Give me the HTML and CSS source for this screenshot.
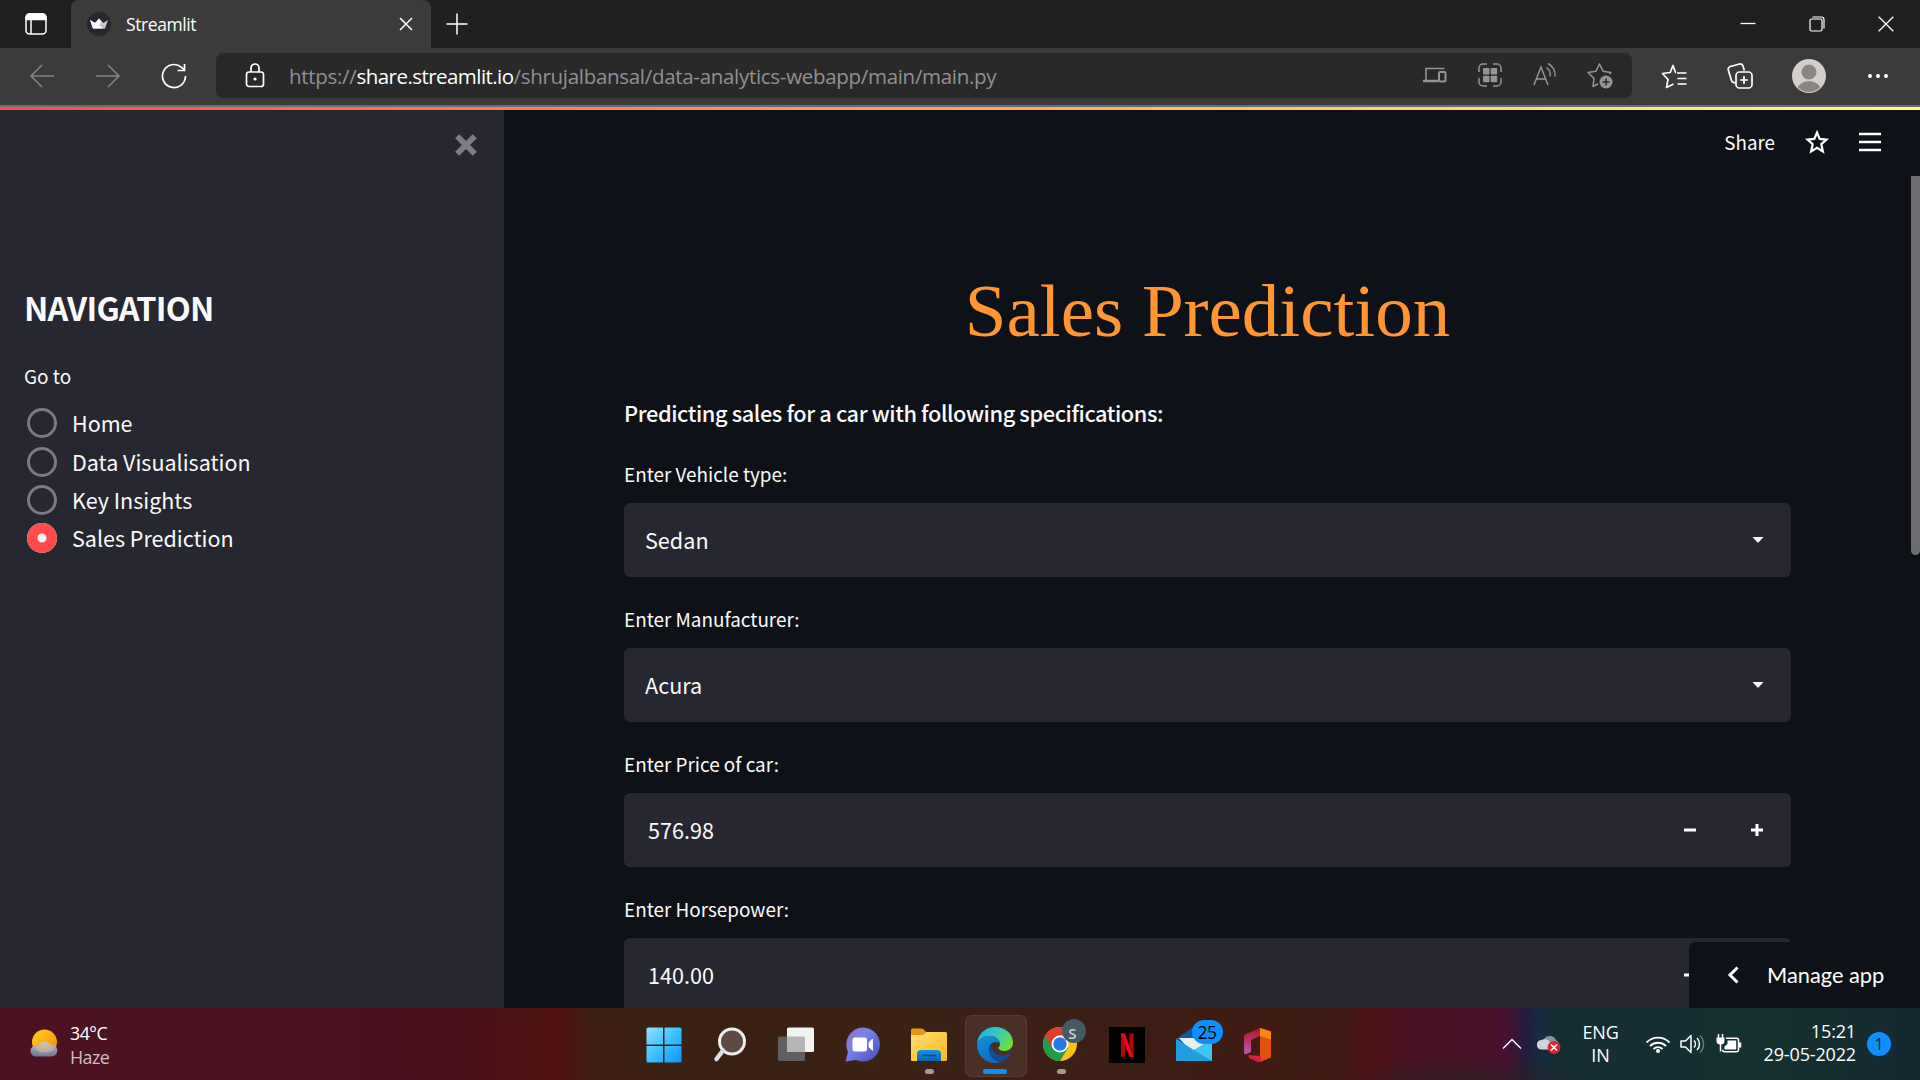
FILE: index.html
```html
<!DOCTYPE html>
<html lang="en">
<head>
<meta charset="utf-8">
<title>Streamlit</title>
<link rel="stylesheet" href="styles.css">
</head>
<body>
<div class="screen">
  <header class="tabstrip">
    <button class="workspaces" aria-label="Tab actions">
      <svg width="24" height="24" viewBox="0 0 24 24" fill="none" stroke="#fff" stroke-width="1.5"><rect x="2" y="2" width="20" height="20" rx="3.5"/><path d="M2 5.5a3.5 3.5 0 0 1 3.5-3.5h13a3.5 3.5 0 0 1 3.5 3.5v2H2z" fill="#fff"/><path d="M7 7v15"/></svg>
    </button>
    <div class="tab">
      <svg class="favicon" width="24" height="24" viewBox="0 0 24 24"><circle cx="12" cy="12" r="12" fill="#262730"/><path d="M3 8l4.500 3L12 6.500 16.500 11 21 8l-3 8.500H6z" fill="#c8c8cc"/><path d="M3 8l9 5 4 3.500H6zM12 6.500l2.500 4L12 13 9 11z" fill="#fff"/></svg>
      <span class="tab-title">Streamlit</span>
      <svg class="tab-close" width="14" height="14" viewBox="0 0 14 14" stroke="#fff" stroke-width="1.5"><path d="M1 1l12 12M13 1L1 13"/></svg>
    </div>
    <svg class="new-tab" width="22" height="22" viewBox="0 0 22 22" stroke="#fff" stroke-width="1.5"><path d="M11 .5v21M.5 11h21"/></svg>
    <div class="window-buttons">
      <svg width="16" height="16" viewBox="0 0 16 16" stroke="#fff" stroke-width="1.3"><path d="M.5 7.500h15"/></svg>
      <svg width="16" height="16" viewBox="0 0 16 16" fill="none" stroke="#fff" stroke-width="1.2"><rect x="1" y="3" width="12" height="12" rx="1.5"/><path d="M3.500 1h9a2.500 2.500 0 0 1 2.500 2.500v9"/></svg>
      <svg width="16" height="16" viewBox="0 0 16 16" stroke="#fff" stroke-width="1.3"><path d="M.7.7l14.600 14.600M15.300.7L.7 15.300"/></svg>
    </div>
  </header>

  <nav class="toolbar">
    <div class="history">
      <svg width="26" height="26" viewBox="0 0 26 26" fill="none" stroke="#848484" stroke-width="1.5"><path d="M25 13H2M13 2L2 13l11 11"/></svg>
      <svg width="26" height="26" viewBox="0 0 26 26" fill="none" stroke="#848484" stroke-width="1.5"><path d="M1 13h23M13 2l11 11-11 11"/></svg>
      <svg width="26" height="26" viewBox="0 0 26 26" fill="none" stroke="#fff" stroke-width="1.7"><path d="M24.500 13A11.500 11.500 0 1 1 20.500 4.300L23.500 7"/><path d="M23.500 1v6.500h-7"/></svg>
    </div>
    <div class="address">
      <svg class="lock" width="20" height="26" viewBox="0 0 20 26" fill="none" stroke="#fff" stroke-width="1.7"><rect x="1.500" y="9" width="17" height="14.500" rx="2.5"/><path d="M6 9V5a4 4 0 0 1 8 0v4"/><circle cx="10" cy="16" r="1.6" fill="#fff" stroke="none"/></svg>
      <span class="url">https://<span class="host">share.streamlit.io</span>/shrujalbansal/data-analytics-webapp/main/main.py</span>
      <div class="page-actions">
        <svg width="26" height="26" viewBox="0 0 26 26" fill="none" stroke="#959595" stroke-width="1.6"><path d="M4 18V6.500h18.500"/><path d="M1 19h15" stroke-width="2.5"/><rect x="17" y="10" width="6.5" height="9.5" rx="1" stroke-width="2"/></svg>
        <svg width="26" height="26" viewBox="0 0 26 26" fill="none" stroke="#959595" stroke-width="1.5"><path d="M2 10V6a4 4 0 0 1 4-4h4M16 2h4a4 4 0 0 1 4 4v4M24 16v4a4 4 0 0 1-4 4h-4M10 24H6a4 4 0 0 1-4-4v-4"/><g fill="#959595" stroke="none"><rect x="6" y="6" width="6.5" height="6.5" rx="1"/><rect x="13.700" y="6" width="6.5" height="6.5" rx="1"/><rect x="6" y="13.700" width="6.5" height="6.5" rx="1"/><rect x="13.700" y="13.700" width="6.5" height="6.5" rx="1"/></g></svg>
        <svg width="26" height="26" viewBox="0 0 26 26" fill="none" stroke="#959595" stroke-width="1.5"><path d="M2 23L9 5l7 18M4.500 17h9M14.500 5.500a9 9 0 0 1 3.500 9M16 1.500a13 13 0 0 1 7 13"/></svg>
        <svg width="26" height="27" viewBox="0 0 26 27" fill="none" stroke="#959595" stroke-width="1.5" stroke-linejoin="round"><path d="M11 22l-5 2.500 1-8L1 10.500l8-1.300L12.500 2 16 9.200l8 1.300-1.500 1.800"/><circle cx="19" cy="20" r="6.5" fill="#959595" stroke="none"/><path d="M19 16.500v7M15.500 20h7" stroke="#292929"/></svg>
      </div>
    </div>
    <div class="browser-actions">
      <svg width="26" height="26" viewBox="0 0 26 26" fill="none" stroke="#fff" stroke-width="1.7" stroke-linejoin="round"><path d="M15 9.500h-.5L12 2.500 9.200 9.500 1.500 10.500l5.500 6-1.500 8 7-3.500M16 10h9.500M16.500 15.500h9M16.500 21h9"/></svg>
      <svg width="26" height="26" viewBox="0 0 26 26" fill="none" stroke="#fff" stroke-width="1.7"><rect x="9" y="9" width="16" height="16" rx="3.5"/><path d="M17 13v8M13 17h8M8.500 20l-2-.6a3 3 0 0 1-2-2L1.300 7a3 3 0 0 1 2-3.500L12.500 1a3 3 0 0 1 3.500 2l1.300 4.500"/></svg>
      <svg width="34" height="34" viewBox="0 0 34 34"><defs><clipPath id="face"><circle cx="17" cy="17" r="16"/></clipPath></defs><circle cx="17" cy="17" r="17" fill="#d3d0cc"/><g clip-path="url(#face)" fill="#8b8683"><circle cx="17" cy="13" r="7.5"/><ellipse cx="17" cy="32" rx="12" ry="10"/></g></svg>
      <svg width="22" height="6" viewBox="0 0 22 6" fill="#fff"><circle cx="3" cy="3" r="2"/><circle cx="11" cy="3" r="2"/><circle cx="19" cy="3" r="2"/></svg>
    </div>
  </nav>
  <div class="rainbow"></div>

  <div class="app">
    <aside class="sidebar">
      <svg class="sidebar-close" width="22" height="22" viewBox="0 0 22 22" stroke="#7d7d83" stroke-width="5.8"><path d="M2.200 2.200l17.600 17.600M19.800 2.200L2.200 19.800"/></svg>
      <h2 class="nav-title">NAVIGATION</h2>
      <p class="nav-label">Go to</p>
      <ul class="options">
        <li><i class="radio"></i><span>Home</span></li>
        <li><i class="radio"></i><span>Data Visualisation</span></li>
        <li><i class="radio"></i><span>Key Insights</span></li>
        <li><i class="radio checked"></i><span>Sales Prediction</span></li>
      </ul>
    </aside>

    <main class="content">
      <div class="app-menu">
        <span class="share">Share</span>
        <svg width="24" height="26" viewBox="0 0 24 26" fill="none" stroke="#fff" stroke-width="2.2"><path d="M12 3.500l2.700 6.400 6.800.7-5.200 4.600 1.600 7.300L12 18.800l-5.900 3.700 1.600-7.300-5.200-4.600 6.800-.7z"/></svg>
        <svg width="22" height="20" viewBox="0 0 22 20" stroke="#fff" stroke-width="2.4"><path d="M0 2h22M0 10h22M0 18h22"/></svg>
      </div>
      <h1 class="title">Sales Prediction</h1>
      <p class="intro">Predicting sales for a car with following specifications:</p>
      <div class="field"><label>Enter Vehicle type:</label>
        <div class="box"><span>Sedan</span><svg class="caret" width="12" height="6" viewBox="0 0 12 6" fill="#fafafa"><path d="M.5 0h11L6.500 5.500h-1z"/></svg></div></div>
      <div class="field"><label>Enter Manufacturer:</label>
        <div class="box"><span>Acura</span><svg class="caret" width="12" height="6" viewBox="0 0 12 6" fill="#fafafa"><path d="M.5 0h11L6.500 5.500h-1z"/></svg></div></div>
      <div class="field"><label>Enter Price of car:</label>
        <div class="box number"><span>576.98</span><div class="steps"><svg width="12" height="12" viewBox="0 0 12 12" stroke="#fff" stroke-width="3"><path d="M0 6h12"/></svg><svg width="12" height="12" viewBox="0 0 12 12" stroke="#fff" stroke-width="3"><path d="M0 6h12M6 0v12"/></svg></div></div></div>
      <div class="field"><label>Enter Horsepower:</label>
        <div class="box number"><span>140.00</span><div class="steps"><svg width="12" height="12" viewBox="0 0 12 12" stroke="#fff" stroke-width="3"><path d="M0 6h12"/></svg><svg width="12" height="12" viewBox="0 0 12 12" stroke="#fff" stroke-width="3"><path d="M0 6h12M6 0v12"/></svg></div></div></div>
      <div class="scrollbar"></div>
      <div class="manage"><svg width="12" height="18" viewBox="0 0 12 18" fill="none" stroke="#fff" stroke-width="3"><path d="M10.500 1.500L3 9l7.500 7.500"/></svg><span>Manage app</span></div>
    </main>
  </div>

  <footer class="taskbar">
    <div class="weather">
      <svg width="28" height="28" viewBox="0 0 28 28"><defs><linearGradient id="sun" x1="0" y1="0" x2="1" y2="1"><stop offset="0" stop-color="#ffd21a"/><stop offset="1" stop-color="#f58a07"/></linearGradient><linearGradient id="cloud" x1="0" y1="0" x2="0" y2="1"><stop offset="0" stop-color="#c3c8d2"/><stop offset="1" stop-color="#717b99"/></linearGradient></defs><circle cx="14.500" cy="13" r="12.5" fill="url(#sun)"/><path d="M6 27.500a5.500 5.500 0 0 1 0-11h2a7.500 7.500 0 0 1 12.500-1 6 6 0 0 1 1.500 12z" fill="url(#cloud)" opacity=".95"/><path d="M5.500 19a9.500 6.500 0 0 0 18 0 9 9 0 0 0-4-3.500 7 7 0 0 0-11 1z" fill="#e5c09a" opacity=".5"/></svg>
      <div class="weather-text"><span>34°C</span><span class="dim">Haze</span></div>
    </div>
    <div class="apps">
      <div class="app-icon"><svg width="36" height="36" viewBox="0 0 36 36"><defs><linearGradient id="win" x1="0" y1="0" x2="1" y2="1"><stop offset="0" stop-color="#8fe3ff"/><stop offset=".5" stop-color="#3cc2ff"/><stop offset="1" stop-color="#0a93ff"/></linearGradient></defs><path d="M2 .5h15v17H.5V2A1.500 1.500 0 0 1 2 .5zM18.500.5H34A1.500 1.500 0 0 1 35.500 2v15.500h-17zM.5 19H17v16.500H2A1.500 1.500 0 0 1 .5 34zM18.500 19h17v15a1.500 1.500 0 0 1-1.500 1.500H18.500z" fill="url(#win)"/></svg></div>
      <div class="app-icon"><svg width="36" height="36" viewBox="0 0 36 36"><circle cx="20" cy="14.500" r="12.5" fill="#614a43" stroke="#eee" stroke-width="3"/><path d="M11 23.500L4.500 32" stroke="#dce1e4" stroke-width="4.5" stroke-linecap="round"/></svg></div>
      <div class="app-icon"><svg width="36" height="36" viewBox="0 0 36 36"><rect x="0" y="9.500" width="27" height="24.5" rx="1.5" fill="#5f5f5f"/><rect x="9" y=".5" width="27" height="24.5" rx="1.5" fill="#f2f2f2"/><path d="M9 9.500h17a1 1 0 0 1 1 1V25H10a1 1 0 0 1-1-1z" fill="#b5b5b5"/></svg></div>
      <div class="app-icon"><svg width="36" height="36" viewBox="0 0 36 36"><defs><linearGradient id="chat" x1="0" y1="0" x2="1" y2="1"><stop offset="0" stop-color="#9b6fb4"/><stop offset=".4" stop-color="#7b83eb"/><stop offset="1" stop-color="#4648b8"/></linearGradient></defs><path d="M18 .5A17 17 0 1 1 11 33L.5 34.500 3 25A17 17 0 0 1 18 .5z" fill="url(#chat)"/><rect x="7.500" y="10.500" width="14.5" height="14" rx="2.5" fill="#fff"/><path d="M24 15.500l3.500-3.500v11.500L24 20z" fill="#fff" stroke="#fff" stroke-width=".8" stroke-linejoin="round"/></svg></div>
      <div class="app-icon running"><svg width="36" height="36" viewBox="0 0 36 36"><defs><linearGradient id="folder" x1="0" y1="0" x2="1" y2="1"><stop offset="0" stop-color="#ffe07a"/><stop offset="1" stop-color="#fbb814"/></linearGradient><linearGradient id="tray" x1="0" y1="0" x2="0" y2="1"><stop offset="0" stop-color="#1496e8"/><stop offset="1" stop-color="#0962b3"/></linearGradient></defs><path d="M0 3a1.500 1.500 0 0 1 1.500-1.500H11c2 0 3 3.500 5 3.500v3H0z" fill="#e29a0c"/><path d="M0 8h12l4-3h18.500A1.500 1.500 0 0 1 36 6.500V33a1 1 0 0 1-1 1H1a1 1 0 0 1-1-1z" fill="url(#folder)"/><path d="M6 34v-7a4 4 0 0 1 4-4h16a4 4 0 0 1 4 4v7z" fill="url(#tray)"/><path d="M11 28.500h14" stroke="#084a8a" stroke-width="1.5"/></svg></div>
      <div class="app-icon active"><svg width="36" height="36" viewBox="0 0 36 36"><defs><linearGradient id="eg" x1="0" y1="0" x2="1" y2=".6"><stop offset="0" stop-color="#1fa7e0"/><stop offset=".5" stop-color="#36c7c4"/><stop offset="1" stop-color="#6be03c"/></linearGradient><linearGradient id="eb" x1="0" y1="0" x2=".4" y2="1"><stop offset="0" stop-color="#1493d8"/><stop offset="1" stop-color="#0d6cc6"/></linearGradient></defs><path d="M0 17C1 6 9 0 18 0c10.500 0 18 7 18 15.500 0 5.500-4 8.500-8.500 8.500-4 0-6-1.500-6-3 0-1 1.500-1.500 1.500-4 0-4-4-8-10-8C7 9 2 12 0 17z" fill="url(#eg)"/><path d="M0 18C1 12 6 9 12 9c6 0 11 3.500 11 8-2-3-9-3-10 3-1 7 5 13 11 15a18 18 0 0 1-24-17z" fill="url(#eb)"/><path d="M13.500 17C10 21 11 31 22 35.500c5-1 9-4 11.500-8 .3-.7-.3-1-1-.7-9 4-18.500-.8-19-9.800z" fill="#134b94"/></svg></div>
      <div class="app-icon running"><svg width="46" height="44" viewBox="0 0 46 44" class="chrome"><g transform="translate(0 8)"><circle cx="17" cy="17" r="17" fill="#fbc116"/><path d="M17 17L2.300 8.500A17 17 0 0 0 17 34l8.500-14z" fill="#219a4b"/><path d="M2.300 8.500A17 17 0 0 1 31.700 8.500H17l-7.500 13z" fill="#e33b2e"/><circle cx="17" cy="17" r="8.5" fill="#fff"/><circle cx="17" cy="17" r="6.7" fill="#2478f0"/></g><circle cx="31" cy="12" r="12" fill="#455a64"/></svg><span class="profile">S</span></div>
      <div class="app-icon"><svg width="36" height="36" viewBox="0 0 36 36"><path d="M0 0h36v36H0z"/><path d="M12 6.500h4v23l-4 .7zM20.500 6.500h4v23.700l-4-.7z" fill="#b1060f"/><path d="M12 6.500h4l8.500 23.700-4.200-.7z" fill="#e50914"/></svg></div>
      <div class="app-icon"><svg width="36" height="36" viewBox="0 0 36 36"><path d="M0 12L16 1h4l16 11v6H0z" fill="#0c59a4"/><path d="M3 11h30v12l-15 5z" fill="#e8eef2"/><path d="M36 12v22H14l-6-5z" fill="#3ec5f3"/><path d="M0 12l36 22H1a1 1 0 0 1-1-1z" fill="#1f9fe2"/></svg><span class="badge">25</span></div>
      <div class="app-icon office"><svg width="36" height="36" viewBox="0 0 36 36"><defs><linearGradient id="ofl" x1="0" y1="0" x2="0" y2="1"><stop offset="0" stop-color="#b01525"/><stop offset="1" stop-color="#bb5db2"/></linearGradient></defs><path d="M20 1v8l-9 4v12l-6 2.500-1-2V10a3 3 0 0 1 2-3z" fill="url(#ofl)"/><path d="M20 1l11 3.500v26L20 35z" fill="#e2500c"/><path d="M20 1l11 3.500v8L20 9z" fill="#f78913"/><path d="M8.500 28l12.500 1v6h-3L9 31z" fill="#d81f3f"/></svg></div>
    </div>
    <div class="tray">
      <svg class="chev" width="20" height="12" viewBox="0 0 20 12" fill="none" stroke="#fff" stroke-width="1.4"><path d="M1 10.500L10 1.500l9 9"/></svg>
      <svg class="drive" width="26" height="22" viewBox="0 0 26 22"><path d="M7 8a7 7 0 0 1 13-1 5.500 5.500 0 0 1 1 9H9z" fill="#8b9496"/><path d="M5 16.500A4.800 4.800 0 0 1 5 7a7 7 0 0 1 9 2l5 7.500z" fill="#d0d6d8"/><circle cx="18" cy="14.500" r="6.5" fill="#dc2530"/><path d="M15 11.500l6 6M21 11.500l-6 6" stroke="#fff" stroke-width="1.5"/></svg>
      <div class="lang"><span>ENG</span><span>IN</span></div>
      <svg class="wifi" width="26" height="20" viewBox="0 0 26 20" fill="none" stroke="#fff" stroke-width="1.8"><path d="M1.500 8.500a16 16 0 0 1 23 0M5 12a11.500 11.500 0 0 1 16 0M8.500 15a6.500 6.500 0 0 1 9 0"/><circle cx="13" cy="17" r="2" fill="#fff" stroke="none"/></svg>
      <svg class="sound" width="26" height="20" viewBox="0 0 26 20" fill="none" stroke="#fff" stroke-width="1.5" stroke-linejoin="round"><path d="M1 7h4.500L11 1.500v17L5.500 13H1zM14 6.500a5 5 0 0 1 0 7M17 4a8.500 8.500 0 0 1 0 12"/><path d="M20 1.500a12 12 0 0 1 0 17" stroke="#657779"/></svg>
      <svg class="battery" width="26" height="20" viewBox="0 0 26 20" fill="none" stroke="#fff" stroke-width="1.5"><path d="M10 4.200h10.500a2 2 0 0 1 2 2v9.600a2 2 0 0 1-2 2H8.500a2 2 0 0 1-2-2"/><path d="M11.500 6.500h8.700v9H8.500v-3l3-2.500z" fill="#fff" stroke="none"/><path d="M24 8.500v5" stroke-width="2.5"/><path d="M2.500 0v4M6.500 0v4M4.500 9v8.500"/><path d="M.5 3.500h8V7a4 3.500 0 0 1-8 0z" fill="#fff" stroke="none"/></svg>
      <div class="clock"><span>15:21</span><span>29-05-2022</span></div>
      <span class="count">1</span>
    </div>
  </footer>
</div>
</body>
</html>
```
FILE: styles.css
```css
* { box-sizing: border-box; }
body { margin: 0; background: #0e1117; }
h1, h2, p, ul { margin: 0; padding: 0; font-weight: 400; }
button { background: none; border: 0; padding: 0; }
svg { display: block; flex: none; overflow: visible; }
span { white-space: nowrap; }

.screen {
  width: 1920px; height: 1080px; overflow: hidden;
  display: flex; flex-direction: column;
  font-family: "Open Sans", "Noto Sans", sans-serif; color: #fff;
}

/* Browser chrome */
.tabstrip { height: 48px; background: #202020; display: flex; align-items: center; flex: none; padding-left: 24px; }
.workspaces { margin-right: 23px; }
.tab { width: 360px; height: 48px; background: #3b3b3b; border-radius: 8px 8px 0 0; display: flex; align-items: center; padding: 0 18px 0 16px; }
.tab-title { font-size: 17.5px; letter-spacing: -.4px; margin-left: 15px; line-height: 24px; padding-bottom: 1px; }
.tab-close { margin-left: auto; }
.new-tab { margin-left: 15px; }
.window-buttons { margin-left: auto; display: flex; gap: 53px; padding-right: 26px; }

.toolbar { height: 57px; background: #3b3b3b; display: flex; align-items: center; flex: none; padding: 0 0 2px 29px; }
.history { display: flex; gap: 40px; width: 187px; }
.address { width: 1416px; height: 45px; background: #292929; border-radius: 7px; display: flex; align-items: center; padding: 0 19px 0 29px; }
.url { font-size: 20.5px; letter-spacing: -.3px; color: #919191; margin-left: 24px; line-height: 28px; }
.host { color: #fff; letter-spacing: -.55px; }
.page-actions { display: flex; margin-left: auto; gap: 29px; }
.browser-actions { display: flex; align-items: center; margin-left: 29px; }
.browser-actions svg:nth-child(2) { margin-left: 40px; }
.browser-actions svg:nth-child(3) { margin-left: 39px; }
.browser-actions svg:nth-child(4) { margin-left: 41px; }
.rainbow { height: 5px; flex: none; border-top: 2px solid #6d6d6d; background: linear-gradient(90deg, #ff4b4b, #fffd80); }

/* Streamlit app */
.app { height: 898px; display: flex; flex: none; font-family: "Noto Sans CJK JP", "Open Sans", sans-serif; color: #fafafa; }
.sidebar { width: 504px; background: #262730; padding: 24px 27px 0 24px; flex: none; }
.sidebar-close { margin-left: auto; }
.nav-title { font-size: 32.5px; font-weight: 700; letter-spacing: -.75px; line-height: 48px; margin-top: 127px; }
.nav-label { font-size: 19px; line-height: 28px; margin-top: 31px; }
.options { list-style: none; margin-top: 14px; padding-left: 3px; }
.options li { display: flex; align-items: center; height: 38.4px; gap: 15px; font-size: 21.5px; line-height: 30px; }
.radio { width: 30px; height: 30px; border-radius: 50%; border: 3px solid #7a7a80; flex: none; }
.radio.checked { border: 0; background: #f0f2f6; box-shadow: inset 0 0 0 10.5px #ff4b4b; }

.content { flex: 1; background: #0e1117; position: relative; overflow: hidden; padding: 0 129px 0 120px; }
.app-menu { display: flex; align-items: center; height: 66px; justify-content: flex-end; margin-right: -90px; }
.share { font-size: 18.8px; padding-bottom: 4px; }
.app-menu svg { margin: -1px 0 1px 30px; }
.title { font-family: "Liberation Serif", serif; font-size: 75px; line-height: 90px; text-align: center; color: #ff9633; margin-top: 90px; }
.intro { font-size: 21.8px; line-height: 36px; font-weight: 500; letter-spacing: -.41px; margin-top: 39px; }
.field { height: 145px; }
.intro + .field { margin-top: 26px; }
.field label { display: block; font-size: 18.9px; line-height: 30px; height: 46px; padding-top: 2px; }
.box { height: 74px; border-radius: 6px; background: #262730; display: flex; align-items: center; justify-content: space-between; font-size: 21.6px; line-height: 30px; padding: 0 27px 0 21px; }
.box span { padding-bottom: 1px; }
.number { padding: 0 28px 0 24px; }
.steps { display: flex; gap: 55px; }
.scrollbar { position: absolute; right: 0; top: 66px; width: 9px; height: 379px; border-radius: 0 0 5px 5px; background: #6e6e72; }
.manage { position: absolute; right: 0; bottom: 0; width: 231px; height: 66px; border-radius: 6px 0 0 0; background: #0e1117; display: flex; align-items: center; padding-left: 38px; gap: 28px; font-family: "Lato", sans-serif; font-size: 21.8px; color: #fff; }
.manage span { padding-bottom: 2px; }

/* Taskbar */
.taskbar {
  height: 72px; flex: none; position: relative; display: grid; grid-template-columns: 643px 1fr auto;
  background:
    radial-gradient(ellipse 130px 34px at 1470px 78px, rgba(44,32,34,.9), transparent),
    linear-gradient(90deg, #4b1322 0, #4b1222 280px, #48111b 450px, #50130f 560px, #3c2014 595px, #3b2015 960px, #3e1d14 1180px, #401a12 1340px, #4d1415 1370px, #471222 1410px, #47112a 1490px, #4a1034 1505px, #291b3a 1523px, #152b42 1540px, #142e33 1560px, #142e33 1650px, #153230 1760px, #14282f 1920px);
}
.weather { display: flex; padding: 21px 0 0 30px; gap: 12px; }
.weather-text { font-size: 17.8px; letter-spacing: -.5px; line-height: 24px; display: flex; flex-direction: column; margin-top: -8px; }
.dim { color: #cfbfc4; }
.apps { display: flex; }
.app-icon { width: 66.2px; height: 72px; display: flex; align-items: center; padding: 2px 0 0 3px; position: relative; flex: none; }
.app-icon.active::before { content: ""; position: absolute; left: -9px; top: 7px; width: 60px; height: 60px; border-radius: 7px; background: rgba(255,255,255,.07); border: 1px solid rgba(255,255,255,.07); }
.active svg { position: relative; }
.app-icon.running::after, .app-icon.active::after { content: ""; position: absolute; left: 17px; top: 61px; width: 9px; height: 5px; border-radius: 3px; background: #a59a97; }
.app-icon.active::after { left: 9px; width: 24px; background: #0a91ff; }
.chrome { margin-top: -9px; }
.profile { position: absolute; left: 28px; top: 14px; font-size: 15px; line-height: 22px; font-weight: 600; color: #cbd3d6; }
.badge { position: absolute; left: 19px; top: 12px; width: 31px; height: 24px; border-radius: 12px; background: #0a91ff; color: #000; font-size: 17.5px; line-height: 24px; text-align: center; letter-spacing: -.5px; }
.office { padding-left: 1px; }
.tray { display: flex; align-items: center; padding-right: 29px; font-size: 18px; letter-spacing: -.15px; line-height: 23px; }
.drive { margin-left: 14px; }
.lang { display: flex; flex-direction: column; align-items: center; margin-left: 20px; }
.wifi { margin-left: 26px; }
.sound { margin-left: 9px; }
.battery { margin-left: 10px; }
.clock { display: flex; flex-direction: column; align-items: flex-end; margin: -2px 0 0 22px; }
.count { width: 24px; height: 24px; border-radius: 50%; background: #0a91ff; color: #0b1720; text-align: center; font-size: 16px; line-height: 24px; margin-left: 11px; }
```
